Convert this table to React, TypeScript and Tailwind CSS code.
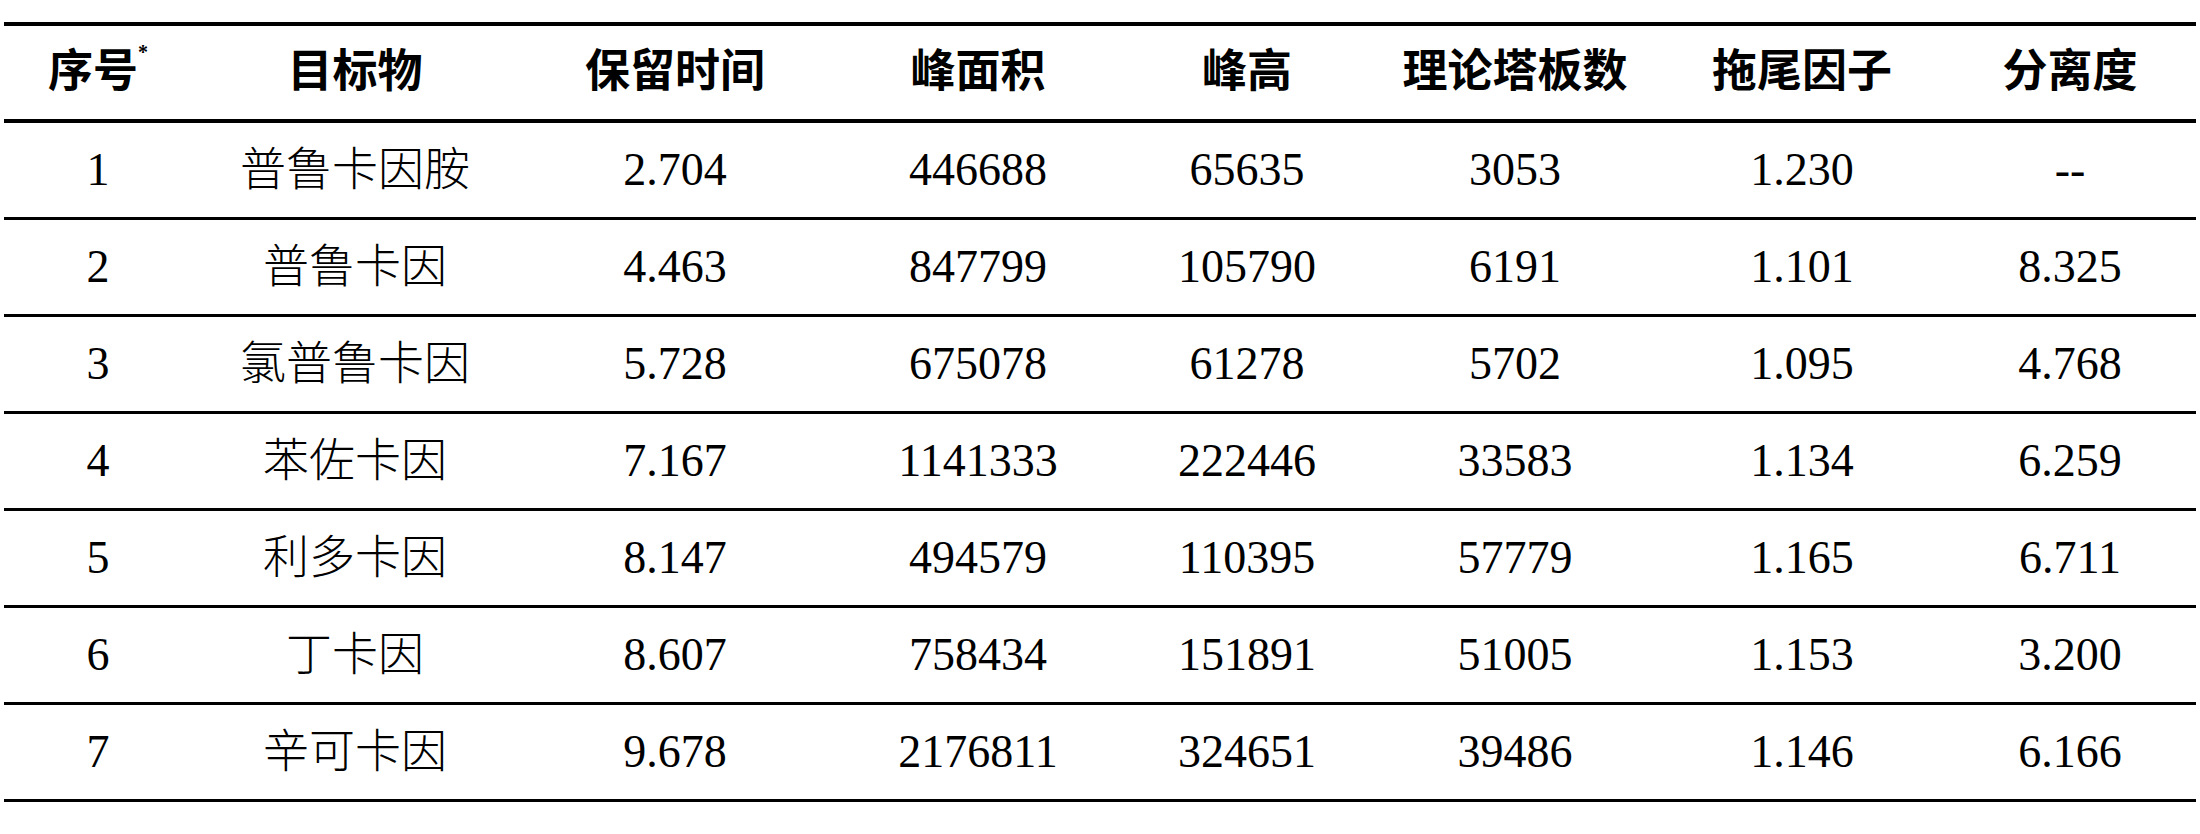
import React from 'react';

const cols = ['序号', '目标物', '保留时间', '峰面积', '峰高', '理论塔板数', '拖尾因子', '分离度'];

const rows = [
  ['1', '普鲁卡因胺', '2.704', '446688', '65635', '3053', '1.230', '--'],
  ['2', '普鲁卡因', '4.463', '847799', '105790', '6191', '1.101', '8.325'],
  ['3', '氯普鲁卡因', '5.728', '675078', '61278', '5702', '1.095', '4.768'],
  ['4', '苯佐卡因', '7.167', '1141333', '222446', '33583', '1.134', '6.259'],
  ['5', '利多卡因', '8.147', '494579', '110395', '57779', '1.165', '6.711'],
  ['6', '丁卡因', '8.607', '758434', '151891', '51005', '1.153', '3.200'],
  ['7', '辛可卡因', '9.678', '2176811', '324651', '39486', '1.146', '6.166'],
];

const grid = 'grid grid-cols-[188px_326px_314px_292px_246px_290px_284px_252px]';

export default function App() {
  return (
    <div
      className="w-[2200px] h-[834px] bg-white text-black pt-[22px] pl-[4px]"
      style={{ fontFamily: '"Liberation Serif", "Noto Sans CJK SC", serif' }}
    >
      <div className="w-[2192px] border-t-[4px] border-black">
        {/* 表头 */}
        <div className={`${grid} h-[97px] border-b-[4px] border-black items-center text-[45px] font-bold`}>
          {cols.map((c, i) => (
            <div key={c} className="text-center leading-none">
              {c}
              {i === 0 && <sup className="text-[20px] font-bold align-top relative top-[2px]">*</sup>}
            </div>
          ))}
        </div>

        {/* 数据行 */}
        {rows.map((r) => (
          <div key={r[0]} className={`${grid} h-[97px] border-b-[3px] border-black items-center text-[46px] font-light`}>
            {r.map((v, j) => (
              <div key={j} className="text-center leading-none">
                {v}
              </div>
            ))}
          </div>
        ))}
      </div>
    </div>
  );
}
